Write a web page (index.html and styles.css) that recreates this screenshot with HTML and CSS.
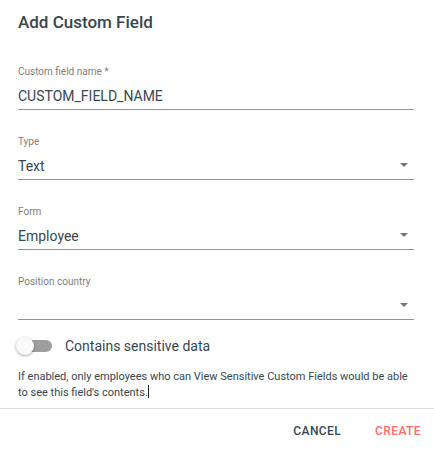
FILE: index.html
```html
<!DOCTYPE html>
<html>
<head>
<meta charset="utf-8">
<link rel="stylesheet" href="styles.css">
</head>
<body>
<div class="dialog">
  <h2 class="title">Add Custom Field</h2>
  <div class="content">
    <div class="field">
      <label class="label">Custom field name *</label>
      <div class="control"><span class="value">CUSTOM_FIELD_NAME</span></div>
    </div>
    <div class="field">
      <label class="label">Type</label>
      <div class="control"><span class="value">Text</span><span class="arrow"></span></div>
    </div>
    <div class="field">
      <label class="label">Form</label>
      <div class="control"><span class="value">Employee</span><span class="arrow"></span></div>
    </div>
    <div class="field">
      <label class="label">Position country</label>
      <div class="control"><span class="value"></span><span class="arrow"></span></div>
    </div>
    <div class="toggle-row">
      <span class="switch"><span class="track"></span><span class="thumb"></span></span>
      <span class="toggle-label">Contains sensitive data</span>
    </div>
    <p class="help">If enabled, only employees who can View Sensitive Custom Fields would be able to see this field's contents.<span class="caret"></span></p>
  </div>
  <div class="actions">
    <button class="btn cancel">Cancel</button>
    <button class="btn create">Create</button>
  </div>
</div>
</body>
</html>
```
FILE: styles.css
```css
html, body {
  margin: 0;
  padding: 0;
  background: #fff;
}
body {
  font-family: Roboto, "Noto Sans", sans-serif;
  color: #37474f;
}
.dialog {
  width: 434px;
  height: 449px;
  display: flex;
  flex-direction: column;
}
.title {
  margin: 0;
  padding: 11px 18px 0;
  font-size: 17px;
  font-weight: 500;
  line-height: 22px;
  color: #37474f;
}
.content {
  padding: 33px 20px 0 18px;
  display: flex;
  flex-direction: column;
}
.field {
  display: flex;
  flex-direction: column;
  margin-bottom: 26px;
}
.label {
  font-size: 10px;
  line-height: 12px;
  color: #808080;
  height: 12px;
}
.control {
  display: flex;
  align-items: center;
  justify-content: space-between;
  height: 31px;
  border-bottom: 1px solid #949494;
}
.value {
  font-size: 14px;
  line-height: 16px;
  color: #37474f;
  padding-top: 4px;
}
.arrow {
  width: 0;
  height: 0;
  border-left: 4.5px solid transparent;
  border-right: 4.5px solid transparent;
  border-top: 4.5px solid #757575;
  margin-right: 6px;
  margin-top: 2px;
}
.toggle-row {
  display: flex;
  align-items: center;
  gap: 13px;
  margin-top: -10px;
  height: 20px;
}
.switch {
  position: relative;
  width: 34px;
  height: 20px;
  display: inline-block;
}
.track {
  position: absolute;
  left: 0;
  top: 4px;
  width: 34px;
  height: 12px;
  border-radius: 6px;
  background: #9e9e9e;
}
.thumb {
  position: absolute;
  left: -2px;
  top: 1px;
  width: 18px;
  height: 18px;
  border-radius: 50%;
  background: #fafafa;
  box-shadow: 0 1px 3px rgba(0,0,0,0.35);
}
.toggle-label {
  font-size: 14px;
  color: #37474f;
}
.help {
  margin: 13px 0 0;
  font-size: 11px;
  line-height: 16px;
  color: #37474f;
  letter-spacing: 0;
}
.caret {
  display: inline-block;
  width: 1px;
  height: 13px;
  background: #222;
  vertical-align: -2px;
}
.actions {
  margin-top: 7px;
  border-top: 1px solid #e0e0e0;
  display: flex;
  justify-content: flex-end;
  gap: 10px;
  padding: 7px 1px 0 8px;
}
.btn {
  font-family: Roboto, "Noto Sans", sans-serif;
  background: none;
  border: none;
  text-transform: uppercase;
  font-size: 12px;
  font-weight: 500;
  letter-spacing: 0.4px;
  padding: 8px 12px;
  line-height: 14px;
}
.cancel { color: #37474f; }
.create { color: #ff6b6b; }
```
